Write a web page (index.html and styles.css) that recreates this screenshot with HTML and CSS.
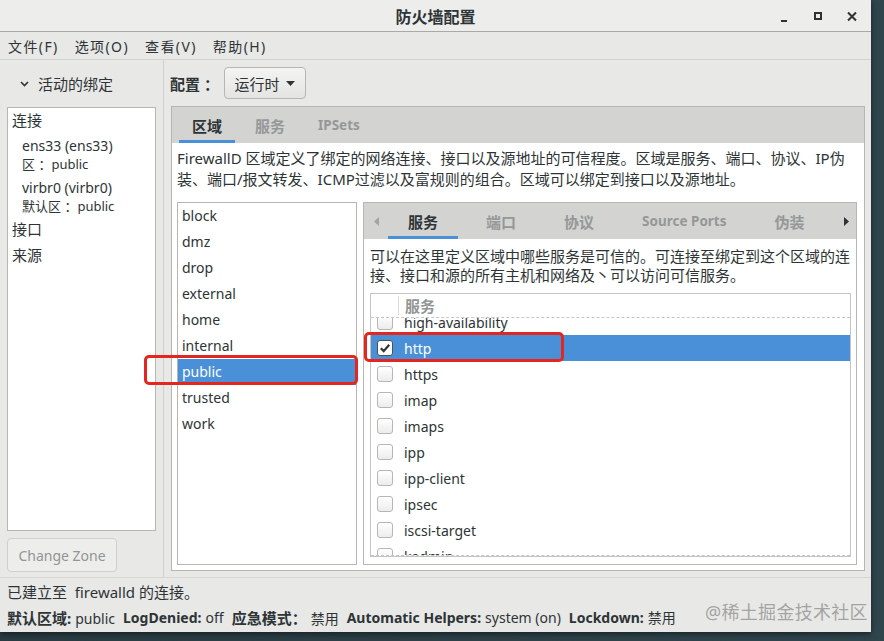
FILE: index.html
```html
<!DOCTYPE html>
<html lang="zh-CN">
<head>
    <meta charset="UTF-8">
    <title>防火墙配置</title>
    <link rel="stylesheet" href="styles.css">
</head>
<body>
    <div class="window">
        <div class="titlebar">
            <span></span>
            <span class="title">防火墙配置</span>
            <div class="controls">
                <svg width="12" height="12" viewBox="0 0 12 12"><path d="M3 10h6" stroke="#2e3436" stroke-width="2"/></svg>
                <svg width="12" height="12" viewBox="0 0 12 12"><rect x="3" y="2" width="6" height="6" fill="none" stroke="#2e3436" stroke-width="2"/></svg>
                <svg width="12" height="12" viewBox="0 0 12 12"><path d="M2 1.5l8 8M10 1.5l-8 8" stroke="#2e3436" stroke-width="2"/></svg>
            </div>
        </div>

        <div class="menubar">
            <span>文件(F)</span>
            <span>选项(O)</span>
            <span>查看(V)</span>
            <span>帮助(H)</span>
        </div>

        <div class="main">
            <div class="sidebar">
                <div class="expander">
                    <svg width="9" height="6" viewBox="0 0 9 6"><path d="M1 1l3.5 3.5L8 1" fill="none" stroke="#2e3436" stroke-width="1.6"/></svg>
                    <span>活动的绑定</span>
                </div>
                <div class="bindings">
                    <div class="bind-head">连接</div>
                    <div class="bind-item first">
                        <div>ens33 (ens33)</div>
                        <div class="sub">区 ：public</div>
                    </div>
                    <div class="bind-item">
                        <div>virbr0 (virbr0)</div>
                        <div class="sub">默认区 ：public</div>
                    </div>
                    <div class="bind-head tall">接口</div>
                    <div class="bind-head tall">来源</div>
                </div>
                <button class="change-zone">Change Zone</button>
            </div>

            <div class="content">
                <div class="config-row">
                    <span class="config-label">配置 ：</span>
                    <button class="combo">运行时
                        <svg width="9" height="5" viewBox="0 0 9 5"><path d="M0 0h9L4.5 5z" fill="#2e3436"/></svg>
                    </button>
                </div>

                <div class="notebook outer">
                    <div class="tabs">
                        <span class="tab active">区域</span>
                        <span class="tab">服务</span>
                        <span class="tab latin">IPSets</span>
                    </div>
                    <div class="page outer-page">
                        <p class="desc">FirewallD 区域定义了绑定的网络连接、接口以及源地址的可信程度。区域是服务、端口、协议、IP伪<br>装、端口/报文转发、ICMP过滤以及富规则的组合。区域可以绑定到接口以及源地址。</p>
                        <div class="split">
                            <ul class="zones">
                                <li>block</li>
                                <li>dmz</li>
                                <li>drop</li>
                                <li>external</li>
                                <li>home</li>
                                <li>internal</li>
                                <li class="selected">public</li>
                                <li>trusted</li>
                                <li>work</li>
                            </ul>

                            <div class="notebook inner">
                                <div class="tabs inner-tabs">
                                    <span class="arrow left">
                                        <svg width="5" height="9" viewBox="0 0 5 9"><path d="M5 0v9L0 4.5z" fill="#a3a5a5"/></svg>
                                    </span>
                                    <span class="tab active">服务</span>
                                    <span class="tab">端口</span>
                                    <span class="tab">协议</span>
                                    <span class="tab latin">Source Ports</span>
                                    <span class="tab">伪装</span>
                                    <span class="arrow right">
                                        <svg width="5" height="9" viewBox="0 0 5 9"><path d="M0 0v9l5-4.5z" fill="#2e3436"/></svg>
                                    </span>
                                </div>
                                <div class="page inner-page">
                                    <p class="desc small">可以在这里定义区域中哪些服务是可信的。可连接至绑定到这个区域的连<br>接、接口和源的所有主机和网络及丶可以访问可信服务。</p>
                                    <div class="tree">
                                        <div class="tree-head">
                                            <span class="check-col"></span>
                                            <span class="col-title">服务</span>
                                        </div>
                                        <div class="tree-body">
                                            <div class="rows">
                                                <div class="row"><span class="check"></span>high-availability</div>
                                                <div class="row selected">
                                                    <svg class="checked" width="16" height="16" viewBox="0 0 16 16"><rect x="0.5" y="0.5" width="15" height="15" rx="2.5" fill="#fff" stroke="#4d5152"/><path d="M3.8 8.2l2.9 2.9 5.5-6.4" fill="none" stroke="#2e3436" stroke-width="2.2"/></svg>
                                                    http
                                                </div>
                                                <div class="row"><span class="check"></span>https</div>
                                                <div class="row"><span class="check"></span>imap</div>
                                                <div class="row"><span class="check"></span>imaps</div>
                                                <div class="row"><span class="check"></span>ipp</div>
                                                <div class="row"><span class="check"></span>ipp-client</div>
                                                <div class="row"><span class="check"></span>ipsec</div>
                                                <div class="row"><span class="check"></span>iscsi-target</div>
                                                <div class="row"><span class="check"></span>kadmin</div>
                                            </div>
                                        </div>
                                        <div class="mark"></div>
                                    </div>
                                </div>
                            </div>
                        </div>
                    </div>
                </div>
            </div>
        </div>

        <div class="status">
            <div class="status-line">已建立至 &nbsp;firewalld 的连接。</div>
            <div class="status-line info">
                <span class="pair"><b class="cjk">默认区域:</b>public</span>
                <span class="pair"><b>LogDenied:</b>off</span>
                <span class="pair"><b class="cjk">应急模式：</b>禁用</span>
                <span class="pair"><b>Automatic Helpers:</b>system (on)</span>
                <span class="pair"><b>Lockdown:</b>禁用</span>
            </div>
        </div>
    </div>

    <div class="watermark">@稀土掘金技术社区</div>
</body>
</html>
```

FILE: styles.css
```css
* {
    box-sizing: border-box;
}
body {
    margin: 0;
    width: 884px;
    height: 641px;
    overflow: hidden;
    position: relative;
    background: linear-gradient(90deg, #2a3c42, #2f464d);
    font-family: "Noto Sans", "Noto Sans CJK SC", sans-serif;
    font-size: 14px;
    color: #2e3436;
}
.window {
    width: 871px;
    height: 632px;
    background-color: #e8e8e7;
    display: flex;
    flex-direction: column;
    box-shadow: 0 2px 6px rgba(0,0,0,0.5);
}

/* title bar + menu */
.titlebar {
    height: 32px;
    flex: none;
    display: grid;
    grid-template-columns: 1fr auto 1fr;
    align-items: center;
    background-color: #ededec;
    border-bottom: 1px solid #a9a9a7;
}
.title {
    font-size: 16px;
    font-weight: bold;
}
.controls {
    display: flex;
    justify-content: flex-end;
    gap: 22px;
    padding-right: 13px;
    padding-top: 2px;
}
.menubar {
    height: 28px;
    flex: none;
    display: flex;
    align-items: center;
    gap: 16px;
    padding-left: 8px;
    letter-spacing: 1.4px;
    border-bottom: 1px solid #d3d3d1;
}

.main {
    height: 517px;
    flex: none;
    display: flex;
}

/* left side */
.sidebar {
    width: 164px;
    flex: none;
    padding: 0 7px;
    border-right: 1px solid #d0d0ce;
    display: flex;
    flex-direction: column;
}
.expander {
    height: 47px;
    display: flex;
    align-items: center;
    gap: 9px;
    padding-left: 13px;
    font-size: 15px;
}
.bindings {
    height: 424px;
    background-color: white;
    border: 1px solid #b6b6b3;
}
.bind-head {
    font-size: 15px;
    line-height: 24px;
    padding-left: 4px;
}
.bind-head.tall {
    line-height: 26px;
}
.bind-item {
    padding-left: 14px;
    line-height: 18px;
    margin-top: 6px;
    margin-bottom: 1px;
}
.bind-item.first {
    margin-top: 5px;
}
.bind-item .sub {
    font-size: 13px;
}
.change-zone {
    margin-top: 7px;
    width: 110px;
    height: 34px;
    border: 1px solid #cfcfcd;
    border-radius: 4px;
    background-color: #ededec;
    color: #929595;
    font-family: inherit;
    font-size: 14px;
    padding: 0;
}

/* right side */
.content {
    flex: 1;
    display: flex;
    flex-direction: column;
    padding: 0 6px 6px 7px;
    min-width: 0;
}
.config-row {
    height: 46px;
    flex: none;
    display: flex;
    align-items: center;
    gap: 5px;
    margin-left: -1px;
}
.config-label {
    font-size: 15px;
    font-weight: bold;
}
.combo {
    width: 82px;
    height: 32px;
    display: flex;
    align-items: center;
    justify-content: center;
    gap: 7px;
    padding: 0;
    border: 1px solid #b6b6b3;
    border-radius: 4px;
    background: linear-gradient(#f4f4f3, #e4e4e2);
    color: #2e3436;
    font-family: inherit;
    font-size: 15px;
}

.notebook {
    border: 1px solid #b6b6b3;
    background-color: white;
    display: flex;
    flex-direction: column;
    min-height: 0;
}
.outer {
    height: 465px;
    flex: none;
}
.tabs {
    height: 36px;
    flex: none;
    display: flex;
    gap: 7px;
    padding-left: 7px;
    background-color: #d3d3d1;
}
.tab {
    display: flex;
    align-items: center;
    padding: 3px 13px 0;
    border-bottom: 3px solid transparent;
    font-size: 15px;
    font-weight: bold;
    color: #959898;
}
.tab.latin {
    font-size: 13.5px;
}
.tab.active {
    color: #2e3436;
    border-bottom-color: #4a90d9;
}
.inner-tabs {
    padding-left: 0;
    gap: 8px;
}
.inner-tabs .tab {
    padding: 3px 20px 0;
}
.arrow {
    display: flex;
    align-items: center;
    justify-content: center;
}
.arrow.left {
    width: 24px;
    margin-right: -8px;
}
.arrow.right {
    width: 20px;
    margin-left: auto;
}

.page {
    flex: 1;
    display: flex;
    flex-direction: column;
    min-height: 0;
}
.outer-page {
    padding: 5px 7px 5px 5px;
}
.desc {
    margin: 0;
    flex: none;
    font-size: 15px;
    line-height: 21px;
}
.desc.small {
    line-height: 19px;
}
.split {
    flex: 1;
    display: flex;
    gap: 6px;
    margin-top: 12px;
    min-height: 0;
}
.zones {
    width: 180px;
    flex: none;
    margin: 0;
    padding: 0;
    list-style: none;
    border: 1px solid #b6b6b3;
}
.zones li {
    height: 26px;
    line-height: 26px;
    padding-left: 4px;
}
.zones li.selected {
    position: relative;
    background-color: #4a90d9;
    color: white;
}
.zones li.selected::after {
    content: "";
    position: absolute;
    left: -34px;
    right: -2px;
    top: -4px;
    bottom: 0;
    border: 3px solid #e5261f;
    border-radius: 5px;
}

.inner {
    flex: 1;
    min-width: 0;
}
.inner-page {
    padding: 8px 5px 7px 6px;
}
.tree {
    flex: 1;
    margin-top: 8px;
    border: 1px solid #c4c4c2;
    position: relative;
    display: flex;
    flex-direction: column;
    min-height: 0;
}
.tree-head {
    height: 23px;
    flex: none;
    display: flex;
    align-items: center;
}
.check-col {
    width: 28px;
    height: 19px;
    border-right: 1px solid #dcdcda;
}
.col-title {
    padding-left: 6px;
    font-size: 15px;
    font-weight: bold;
    color: #929595;
}
.tree-body {
    flex: 1;
    min-height: 0;
    overflow: hidden;
    border-top: 1px dashed #c6c6c4;
    border-bottom: 1px dashed #c6c6c4;
}
.rows {
    margin-top: -9px;
}
.row {
    height: 26px;
    display: flex;
    align-items: center;
    gap: 11px;
    padding-left: 6px;
}
.row.selected {
    background-color: #4a90d9;
    color: white;
}
.check {
    width: 16px;
    height: 16px;
    border: 1px solid #b6b6b3;
    border-radius: 3px;
    background: linear-gradient(#ffffff, #ececeb);
}
.mark {
    position: absolute;
    left: -7px;
    top: 38px;
    width: 200px;
    height: 30px;
    border: 3px solid #e5261f;
    border-radius: 5px;
}

/* status area */
.status {
    height: 55px;
    flex: none;
    padding: 1px 7px 0;
    border-top: 1px solid #d6d6d4;
}
.status-line {
    height: 26px;
    line-height: 26px;
    font-size: 15px;
    white-space: nowrap;
}
.info {
    display: flex;
    gap: 8px;
    font-size: 14px;
}
.pair b {
    font-size: 14px;
    margin-right: 4px;
}
.pair b.cjk {
    font-size: 15px;
}
.watermark {
    position: absolute;
    left: 705px;
    top: 598px;
    font-size: 18px;
    color: rgba(140,140,140,0.75);
    letter-spacing: 0.3px;
}
```
